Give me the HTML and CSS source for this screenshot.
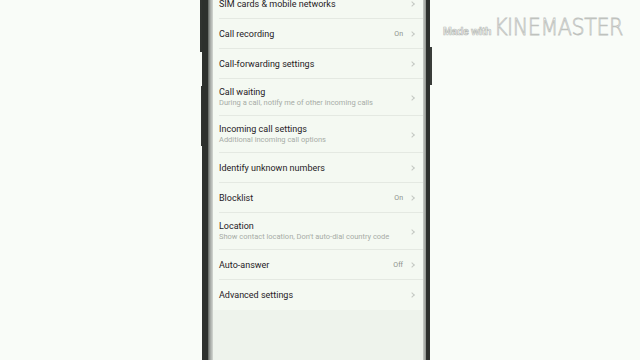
FILE: index.html
```html
<!DOCTYPE html>
<html>
<head>
<meta charset="utf-8">
<link rel="stylesheet" href="styles.css">
</head>
<body>
<div class="stage">
  <div class="phone">
    <div class="btn btn-l1"></div>
    <div class="btn btn-l2"></div>
    <div class="btn btn-r1"></div>
    <div class="bezel">
      <div class="screen">
        <ul class="list">
          <li class="row"><div class="txt"><span class="title">SIM cards &amp; mobile networks</span></div><span class="chev"></span></li>
          <li class="row"><div class="txt"><span class="title">Call recording</span></div><span class="val">On</span><span class="chev"></span></li>
          <li class="row"><div class="txt"><span class="title">Call-forwarding settings</span></div><span class="chev"></span></li>
          <li class="row tall"><div class="txt"><span class="title">Call waiting</span><span class="sub">During a call, notify me of other incoming calls</span></div><span class="chev"></span></li>
          <li class="row tall"><div class="txt"><span class="title">Incoming call settings</span><span class="sub">Additional incoming call options</span></div><span class="chev"></span></li>
          <li class="row"><div class="txt"><span class="title">Identify unknown numbers</span></div><span class="chev"></span></li>
          <li class="row"><div class="txt"><span class="title">Blocklist</span></div><span class="val">On</span><span class="chev"></span></li>
          <li class="row tall"><div class="txt"><span class="title">Location</span><span class="sub">Show contact location, Don't auto-dial country code</span></div><span class="chev"></span></li>
          <li class="row"><div class="txt"><span class="title">Auto-answer</span></div><span class="val">Off</span><span class="chev"></span></li>
          <li class="row last"><div class="txt"><span class="title">Advanced settings</span></div><span class="chev"></span></li>
        </ul>
        <div class="rest"></div>
      </div>
    </div>
  </div>
  <div class="watermark"><span class="made">Made with</span><span class="km">KINEMASTER</span></div>
</div>
</body>
</html>
```

FILE: styles.css
```css
* { box-sizing: border-box; }
html, body { margin: 0; padding: 0; }
body {
  width: 640px;
  height: 360px;
  overflow: hidden;
  background: #f9fcf8;
  font-family: Roboto, "Liberation Sans", sans-serif;
}
.stage {
  position: relative;
  width: 640px;
  height: 360px;
  padding-left: 202px;
}
.phone {
  position: relative;
  width: 228px;
  height: 360px;
  background: #2d302d;
  padding: 0 4px 0 6px;
}
.btn {
  position: absolute;
  background: #303330;
}
.btn-l1 { left: -2px; top: 0; width: 2px; height: 52px; }
.btn-l2 { left: -1px; top: 86px; width: 1px; height: 60px; }
.btn-r1 { right: -2px; top: 47px; width: 2px; height: 38px; background: #3a3d3a; }
.bezel {
  height: 360px;
  background: linear-gradient(90deg, #5e625e 0, #9ea29e 2px, #d4d8d3 5px, #f2f7f0 5px, #f2f7f0 calc(100% - 3px), #c9cdc8 calc(100% - 3px), #8d918c 100%);
  padding: 0 3px 0 5px;
}
.screen {
  height: 360px;
  background: #eef3ec;
  display: flex;
  flex-direction: column;
  overflow: hidden;
}
.list {
  list-style: none;
  margin: -11px 0 0 0;
  padding: 0;
  background: #f4f9f2;
}
.row {
  height: 30px;
  display: flex;
  align-items: center;
  padding: 0 7px 0 6px;
  position: relative;
}
.row::after {
  content: "";
  position: absolute;
  left: 6px;
  right: 0;
  bottom: 0;
  height: 1px;
  background: #e4e9e2;
}
.row.last::after { display: none; }
.row.tall { height: 37px; }
.txt {
  flex: 1;
  display: flex;
  flex-direction: column;
  min-width: 0;
}
.title {
  font-size: 9px;
  line-height: 11px;
  color: #1f211f;
  white-space: nowrap;
}
.sub {
  font-size: 7.5px;
  line-height: 10px;
  color: #a7aca6;
  white-space: nowrap;
}
.val {
  font-size: 7px;
  color: #8c908b;
  margin-right: 7px;
}
.chev {
  width: 4px;
  height: 4px;
  border-top: 1px solid #c4c8c3;
  border-right: 1px solid #c4c8c3;
  transform: rotate(45deg);
  margin-right: 2px;
}
.rest { flex: 1; }
.watermark {
  position: absolute;
  left: 443px;
  top: 14px;
  display: flex;
  align-items: baseline;
  color: #ffffff;
}
.made {
  font-family: "Liberation Sans", Arial, sans-serif;
  font-weight: bold;
  font-size: 10.5px;
  -webkit-text-stroke: 0.7px #b9bcb8;
  margin-right: 3px;
  letter-spacing: -0.3px;
}
.km {
  font-family: "DejaVu Sans", sans-serif;
  font-weight: 300;
  font-size: 23px;
  -webkit-text-stroke: 0.8px #bfc2be;
  letter-spacing: -0.5px;
  transform: scaleX(0.9);
  transform-origin: left center;
  display: inline-block;
}
```
